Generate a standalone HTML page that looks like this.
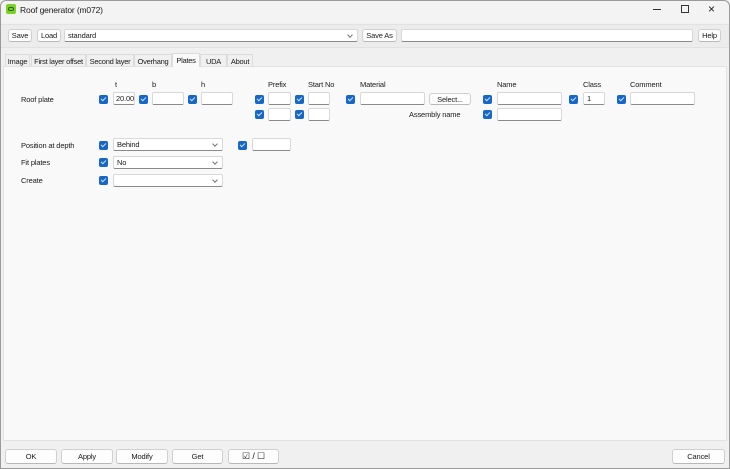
<!DOCTYPE html>
<html><head><meta charset="utf-8"><style>
*{box-sizing:border-box;margin:0;padding:0}
body{width:730px;height:469px;background:#f0f0f0;font-family:"Liberation Sans",sans-serif;font-size:7.5px;letter-spacing:-0.15px;color:#1a1a1a;position:relative;overflow:hidden}
.a{position:absolute}
.win{position:absolute;left:0;top:0;width:730px;height:469px;border:1px solid #9a9a9a;border-radius:6px 6px 0 0}
.btn{position:absolute;background:#fdfdfd;border:1px solid #d0d0d0;border-bottom-color:#b8b8b8;border-radius:3px;text-align:center;line-height:11px;white-space:nowrap}
.in{position:absolute;background:#fff;border:1px solid #d8d8d8;border-bottom:1px solid #8a8a8a;border-radius:2px;height:13px;line-height:11px;padding-left:3px;white-space:nowrap;overflow:hidden}
.cb{position:absolute;width:9px;height:9px;background:#1767c9;border-radius:2px}
.cb::after{content:"";position:absolute;left:3px;top:1px;width:2px;height:4px;border:solid #cfe0f5;border-width:0 1px 1px 0;transform:rotate(45deg)}
.cmb::after{content:"";position:absolute;right:5px;top:3px;width:3px;height:3px;border:solid #777;border-width:0 1px 1px 0;transform:rotate(45deg)}
.tab{position:absolute;top:54px;height:13px;line-height:13px;text-align:center;border:1px solid #dcdcdc;border-bottom:none;background:#f0f0f0;white-space:nowrap;letter-spacing:-0.25px}
.t{position:absolute;white-space:nowrap}
</style></head><body>
<div class="win"></div>
<div class="a" style="left:1px;top:1px;width:728px;height:22px;background:#f3f3f3;border-radius:6px 6px 0 0"></div>
<div class="a" style="left:6px;top:4px;width:10px;height:10px;background:#7ed321;border-radius:2px"></div>
<div class="a" style="left:8px;top:7px;width:6px;height:4px;border:1px solid #2a5a10;border-radius:2px"></div>
<div class="t" style="left:20px;top:5px;font-size:8.5px">Roof generator (m072)</div>
<div class="a" style="left:653px;top:9px;width:8px;height:1px;background:#333"></div>
<div class="a" style="left:681px;top:5px;width:8px;height:8px;border:1px solid #333"></div>
<div class="t" style="left:708px;top:2px;font-size:12px">×</div>
<div class="a" style="left:1px;top:24px;width:728px;height:24px;background:#ececec;border-top:1px solid #e2e2e2;border-bottom:1px solid #e2e2e2"></div>
<div class="btn" style="left:8px;top:29px;width:24px;height:13px">Save</div>
<div class="btn" style="left:37px;top:29px;width:24px;height:13px">Load</div>
<div class="in cmb" style="left:64px;top:29px;width:294px">standard</div>
<div class="btn" style="left:362px;top:29px;width:35px;height:13px">Save As</div>
<div class="in" style="left:401px;top:29px;width:292px"></div>
<div class="btn" style="left:698px;top:29px;width:23px;height:13px">Help</div>
<div class="tab" style="left:5px;width:25px">Image</div>
<div class="tab" style="left:31px;width:55px">First layer offset</div>
<div class="tab" style="left:86px;width:48px">Second layer</div>
<div class="tab" style="left:134px;width:38px">Overhang</div>
<div class="tab" style="left:172px;top:53px;width:28px;height:14px;background:#f9f9f9;z-index:2">Plates</div>
<div class="tab" style="left:200px;width:27px">UDA</div>
<div class="tab" style="left:227px;width:26px">About</div>
<div class="a" style="left:3px;top:66px;width:724px;height:375px;background:#f9f9f9;border:1px solid #e2e2e2"></div>
<div class="t" style="left:115px;top:80px">t</div>
<div class="t" style="left:152px;top:80px">b</div>
<div class="t" style="left:201px;top:80px">h</div>
<div class="t" style="left:268px;top:80px">Prefix</div>
<div class="t" style="left:308px;top:80px">Start No</div>
<div class="t" style="left:360px;top:80px">Material</div>
<div class="t" style="left:497px;top:80px">Name</div>
<div class="t" style="left:583px;top:80px">Class</div>
<div class="t" style="left:630px;top:80px">Comment</div>
<div class="t" style="left:21px;top:95px">Roof plate</div>
<div class="cb" style="left:99px;top:95px"></div><div class="in" style="left:113px;top:92px;width:22px;padding-left:2px">20.00</div>
<div class="cb" style="left:139px;top:95px"></div><div class="in" style="left:152px;top:92px;width:32px"></div>
<div class="cb" style="left:188px;top:95px"></div><div class="in" style="left:201px;top:92px;width:32px"></div>
<div class="cb" style="left:255px;top:95px"></div><div class="in" style="left:268px;top:92px;width:23px"></div>
<div class="cb" style="left:295px;top:95px"></div><div class="in" style="left:308px;top:92px;width:22px"></div>
<div class="cb" style="left:346px;top:95px"></div><div class="in" style="left:360px;top:92px;width:65px"></div>
<div class="btn" style="left:429px;top:93px;width:42px;height:12px">Select...</div>
<div class="cb" style="left:483px;top:95px"></div><div class="in" style="left:497px;top:92px;width:65px"></div>
<div class="cb" style="left:569px;top:95px"></div><div class="in" style="left:583px;top:92px;width:22px">1</div>
<div class="cb" style="left:617px;top:95px"></div><div class="in" style="left:630px;top:92px;width:65px"></div>
<div class="cb" style="left:255px;top:110px"></div><div class="in" style="left:268px;top:108px;width:23px"></div>
<div class="cb" style="left:295px;top:110px"></div><div class="in" style="left:308px;top:108px;width:22px"></div>
<div class="t" style="left:409px;top:110px">Assembly name</div>
<div class="cb" style="left:483px;top:110px"></div><div class="in" style="left:497px;top:108px;width:65px"></div>
<div class="t" style="left:21px;top:141px">Position at depth</div>
<div class="cb" style="left:99px;top:141px"></div><div class="in cmb" style="left:113px;top:138px;width:110px">Behind</div>
<div class="cb" style="left:238px;top:141px"></div><div class="in" style="left:252px;top:138px;width:39px"></div>
<div class="t" style="left:21px;top:158px">Fit plates</div>
<div class="cb" style="left:99px;top:158px"></div><div class="in cmb" style="left:113px;top:156px;width:110px">No</div>
<div class="t" style="left:21px;top:176px">Create</div>
<div class="cb" style="left:99px;top:176px"></div><div class="in cmb" style="left:113px;top:174px;width:110px"></div>
<div class="btn" style="left:5px;top:449px;width:52px;height:15px;line-height:13px">OK</div>
<div class="btn" style="left:61px;top:449px;width:52px;height:15px;line-height:13px">Apply</div>
<div class="btn" style="left:116px;top:449px;width:52px;height:15px;line-height:13px">Modify</div>
<div class="btn" style="left:172px;top:449px;width:51px;height:15px;line-height:13px">Get</div>
<div class="btn" style="left:228px;top:449px;width:51px;height:15px;line-height:13px;font-size:9px">☑ / ☐</div>
<div class="btn" style="left:672px;top:449px;width:53px;height:15px;line-height:13px">Cancel</div>
</body></html>
